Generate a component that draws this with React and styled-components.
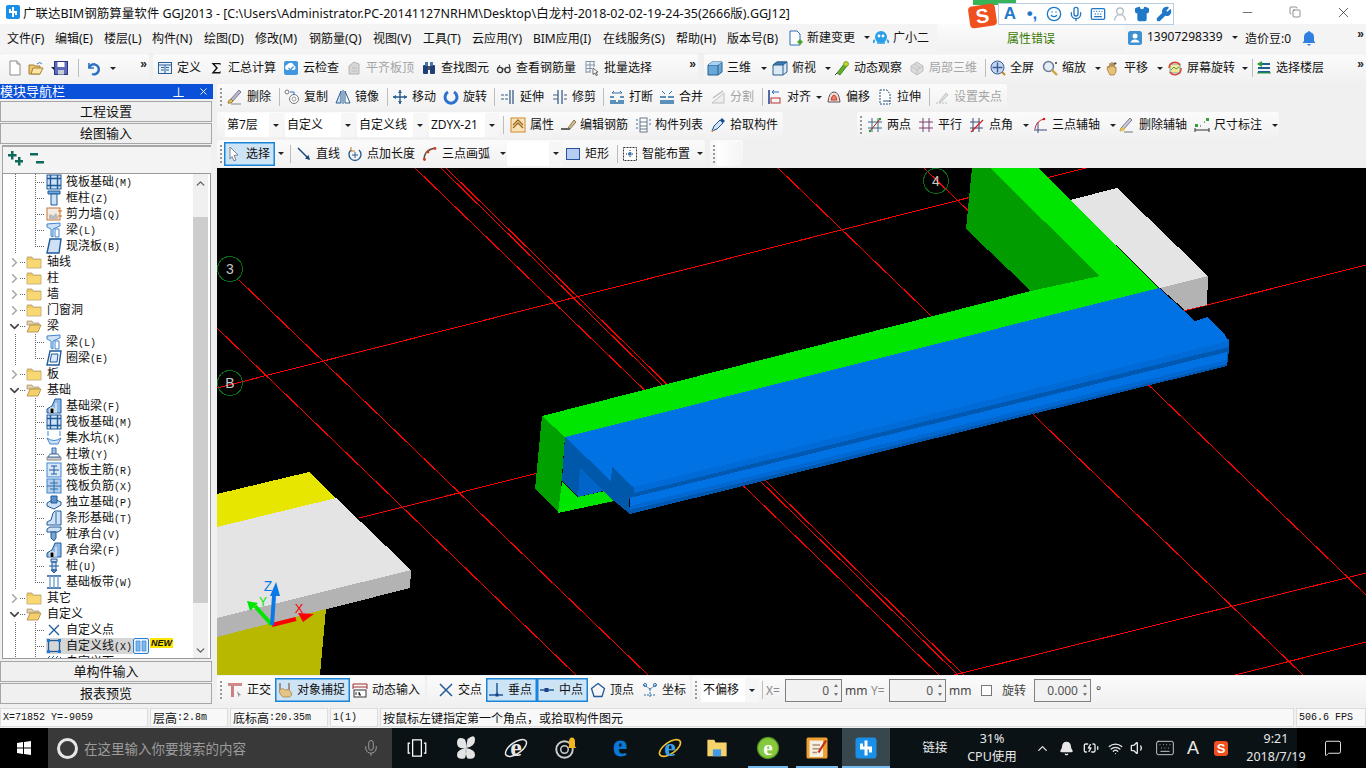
import React from "react";
import styled, { createGlobalStyle } from "styled-components";
import {
  Minus, Copy, X, Smile, Mic, Keyboard, Shirt, Wrench, UserRound, ChevronUp, Bell,
  BatteryCharging, Wifi, Volume1, MessageSquare, ChevronRight, ChevronDown,
} from "lucide-react";

const GlobalStyle = createGlobalStyle`
  html, body { margin: 0; padding: 0; background: #f0f0f0; overflow: hidden; }
  body { font-family: "Noto Sans", "Noto Sans CJK SC", sans-serif; font-size: 12px; color: #111; }
`;

const Page = styled.div`
  position: relative;
  width: 1366px;
  height: 768px;
  display: flex;
  flex-direction: column;
  overflow: hidden;
  background: #f0f0f0;
`;

/* title bar */
const TitleBar = styled.div`
  height: 24px;
  flex: none;
  display: flex;
  align-items: center;
  background: #fff;
  padding-left: 5px;
  gap: 2px;
`;
const TitleText = styled.div`
  font-size: 12.5px;
  white-space: nowrap;
  flex: 1;
`;
const WinBtn = styled.div`
  width: 46px;
  height: 24px;
  display: flex;
  align-items: center;
  justify-content: center;
  color: #222;
`;
const ImeBar = styled.div`
  position: absolute;
  top: 3px;
  left: 998px;
  width: 176px;
  height: 22px;
  display: flex;
  align-items: center;
  gap: 6px;
  padding-left: 3px;
  box-sizing: border-box;
  background: #fff;
  border: 1px solid #b9cde0;
  color: #1f78c8;
`;
const ImeGreen = styled.div`
  position: absolute;
  top: 0;
  left: 973px;
  width: 43px;
  height: 5px;
  background: #35b558;
`;
const ImeLogo = styled.div`
  position: absolute;
  top: 5px;
  left: 969px;
  width: 27px;
  height: 22px;
  border-radius: 4px;
  background: #f0501e;
  color: #fff;
  font: 900 20px/22px "Liberation Sans", sans-serif;
  text-align: center;
  transform: rotate(-8deg);
`;
const ImeLetter = styled.span`
  font: 700 17px/20px "Liberation Sans", sans-serif;
  width: 16px;
  text-align: center;
`;

/* menu */
const MenuBar = styled.div`
  height: 29px;
  flex: none;
  display: flex;
  align-items: center;
  box-sizing: border-box;
  padding: 0 0 2px 7px;
  background: #f4f4f4;
`;
const MenuItem = styled.div`
  width: ${(p) => p.$w}px;
  flex: none;
  white-space: nowrap;
`;
const AlertTab = styled.div`
  width: 188px;
  height: 100%;
  flex: none;
  display: flex;
  align-items: center;
  justify-content: center;
  background: linear-gradient(#fbfbfb, #f1f1f1);
  color: #3c7a00;
  border-radius: 3px 3px 0 0;
`;
const Beans = styled.div`
  margin-left: 3px;
  width: 56px;
  flex: none;
  white-space: nowrap;
`;
const More = styled.div`
  margin-left: auto;
  padding-right: 2px;
  margin-bottom: 8px;
  font: 700 12px/12px "Liberation Sans", sans-serif;
  color: #222;
`;

/* toolbars */
const ToolRow = styled.div`
  display: flex;
  height: ${(p) => p.$h || 26}px;
  flex: none;
  margin-top: ${(p) => p.$mt || 0}px;
  margin-bottom: ${(p) => p.$mb ?? 2}px;
`;
const ToolGroup = styled.div`
  display: flex;
  align-items: center;
  height: 100%;
  width: ${(p) => (p.$w ? `${p.$w}px` : "auto")};
  flex: ${(p) => (p.$w ? "none" : 1)};
  margin-left: ${(p) => p.$ml || 0}px;
  padding-left: ${(p) => p.$pl || 0}px;
  box-sizing: border-box;
  background: linear-gradient(#fbfbfb, #f1f1f1);
  border-radius: 3px;
`;
const ToolBtn = styled.div`
  width: ${(p) => p.$w}px;
  height: ${(p) => (p.$active ? "24px" : "100%")};
  flex: none;
  display: flex;
  align-items: center;
  gap: 4px;
  padding-left: 2px;
  box-sizing: border-box;
  white-space: nowrap;
  color: ${(p) => (p.$off ? "#a4a4a4" : "#111")};
  background: ${(p) => (p.$active ? "#cde4f7" : "transparent")};
  box-shadow: ${(p) => (p.$active ? "inset 0 0 0 1.5px #1a84d8" : "none")};
  span { margin-bottom: 2px; }
`;
const Tri = styled.i`
  flex: none;
  width: 0;
  height: 0;
  margin-left: ${(p) => p.$ml ?? 1}px;
  border-left: 3px solid transparent;
  border-right: 3px solid transparent;
  border-top: 3px solid #222;
`;
const Sep = styled.div`
  width: ${(p) => p.$w}px;
  height: 18px;
  flex: none;
  background: linear-gradient(#bdbdbd, #bdbdbd) center / 1px 100% no-repeat;
`;
const Handle = styled.div`
  width: ${(p) => p.$w}px;
  height: 18px;
  flex: none;
  background: repeating-linear-gradient(to bottom, #999 0 2px, transparent 2px 4px) 3px 0 / 2px 100% no-repeat;
`;
const Combo = styled.div`
  width: ${(p) => p.$w}px;
  height: 24px;
  margin-left: ${(p) => p.$ml || 0}px;
  flex: none;
  display: flex;
  align-items: center;
  white-space: nowrap;
`;
const ComboText = styled.div`
  flex: 1;
  height: 100%;
  padding: 0 0 2px 2px;
  box-sizing: border-box;
  display: flex;
  align-items: center;
  background: #fff;
`;
const ComboArrow = styled.div`
  width: 14px;
  height: 100%;
  flex: none;
  display: flex;
  align-items: center;
  justify-content: center;
  background: #f6f6f6;
`;
const FakeBox = styled.div`
  width: 24px;
  height: 24px;
  background: linear-gradient(to right, #fff, #f4f4f4);
`;

/* main */
const Main = styled.div`
  flex: 1;
  display: flex;
  min-height: 0;
`;
const Side = styled.div`
  width: 217px;
  flex: none;
  display: flex;
  flex-direction: column;
`;
const SideHead = styled.div`
  width: 213px;
  height: 15px;
  flex: none;
  margin-bottom: 2px;
  display: flex;
  align-items: center;
  background: #0a50d8;
  color: #fff;
  font-size: 13px;
  padding-right: 4px;
  box-sizing: border-box;
  gap: 13px;
`;
const SideTitle = styled.span`
  flex: 1;
  line-height: 15px;
`;
const SideTab = styled.div`
  width: 212px;
  height: 21px;
  flex: none;
  margin-bottom: 1px;
  padding-bottom: 2px;
  box-sizing: border-box;
  display: flex;
  align-items: center;
  justify-content: center;
  background: #f0f0f0;
  border: 1px solid #a6a6a6;
  font-size: 13px;
`;
const TreeTools = styled.div`
  width: 209px;
  height: 28px;
  margin-left: 2px;
  flex: none;
  box-sizing: border-box;
  border-top: 2px solid #a6a6a6;
  border-left: 1px solid #a6a6a6;
  display: flex;
  align-items: center;
  padding: 0 0 4px 4px;
  gap: 6px;
  background: #f4f4f4;
`;
const TreeBox = styled.div`
  width: 209px;
  height: 486px;
  margin: 0 0 2px 2px;
  flex: none;
  box-sizing: border-box;
  border: 1px solid #9a9a9a;
  background: #fff;
  display: flex;
  overflow: hidden;
`;
const TreeList = styled.div`
  flex: 1;
  min-width: 0;
`;
const dotsV = "repeating-linear-gradient(to bottom, #666 0 1px, transparent 1px 2px)";
const dotsH = "repeating-linear-gradient(to right, #666 0 1px, transparent 1px 2px)";
const TreeRow = styled.div`
  height: 16px;
  display: flex;
  align-items: center;
  white-space: nowrap;
  font-family: "Liberation Mono", "Noto Sans CJK SC", monospace;
  padding-left: ${(p) => (p.$child ? 43 : 6)}px;
  background-repeat: no-repeat;
  background-image: ${(p) =>
    p.$child ? `${dotsV}, ${dotsV}, ${dotsH}` : `${dotsH}`};
  background-size: ${(p) =>
    p.$child ? `1px 100%, 1px ${p.$last ? "8px" : "100%"}, 10px 1px` : "6px 1px"};
  background-position: ${(p) =>
    p.$child ? "12px 0, 32px 0, 32px 8px" : "17px 8px"};
`;
const RowLabel = styled.div`
  display: flex;
  align-items: center;
  gap: 4px;
  height: 16px;
  background: ${(p) => (p.$sel ? "#d6d6d6" : "transparent")};
  padding-right: ${(p) => (p.$sel ? 1 : 0)}px;
  span { margin-bottom: 2px; }
`;
const Hot = styled.span`
  font: 10px "Liberation Mono", monospace;
`;
const FolderArrow = styled.div`
  width: 10px;
  flex: none;
  display: flex;
  justify-content: center;
  margin-right: 7px;
  color: ${(p) => (p.$open ? "#444" : "#a8a8a8")};
  svg { margin: 0 -3px; }
`;
const FolderName = styled.span`
  margin: 0 0 2px 5px;
`;
const NewBadge = styled.span`
  margin: -7px 0 0 1px;
  padding: 0 1px;
  background: #ffe600;
  font: italic 700 9px/10px "Liberation Sans", sans-serif;
  color: #111;
`;
const ScrollBar = styled.div`
  width: 15px;
  flex: none;
  margin-right: 2px;
  display: flex;
  flex-direction: column;
  align-items: center;
  background: #f0f0f0;
`;
const ScrollEnd = styled.div`
  height: 43px;
  flex: none;
  display: flex;
  align-items: flex-start;
  justify-content: center;
  padding: 3px 0;
  box-sizing: border-box;
  color: #606060;
`;
const ScrollThumb = styled.div`
  width: 15px;
  height: 386px;
  flex: none;
  background: #cdcdcd;
`;
const ScrollRest = styled.div`
  flex: 1;
  display: flex;
  align-items: flex-end;
  justify-content: center;
  color: #606060;
  padding-bottom: 1px;
`;

const Work = styled.div`
  flex: 1;
  min-width: 0;
  display: flex;
  flex-direction: column;
`;
const Canvas = styled.div`
  height: 507px;
  flex: none;
  background: #000;
  overflow: hidden;
  svg { display: block; }
`;
const FormLabel = styled.span`
  color: ${(p) => (p.$dim ? "#8a8a8a" : "#444")};
  margin-left: ${(p) => p.$ml || 0}px;
  width: ${(p) => (p.$w ? `${p.$w}px` : "auto")};
  flex: none;
`;
const SpinBox = styled.div`
  width: 57px;
  height: 23px;
  flex: none;
  box-sizing: border-box;
  border: 1px solid #808080;
  display: flex;
  align-items: center;
  justify-content: flex-end;
  color: #555;
  gap: 3px;
  padding-right: 2px;
  background: #f2f2f2;
`;
const SpinArrows = styled.div`
  display: flex;
  flex-direction: column;
  gap: 6px;
  width: 7px;
  align-items: center;
`;
const SpinTri = styled.i`
  width: 0;
  height: 0;
  border-left: 2.5px solid transparent;
  border-right: 2.5px solid transparent;
  ${(p) => (p.$up ? "border-bottom: 3px solid #777;" : "border-top: 3px solid #777;")}
`;
const CheckBox = styled.div`
  width: 11px;
  height: 11px;
  flex: none;
  margin-left: 8px;
  box-sizing: border-box;
  border: 1px solid #777;
  background: #fff;
`;

/* status bar */
const StatusBar = styled.div`
  height: 23px;
  flex: none;
  box-sizing: border-box;
  padding: 3px 0 1px;
  display: flex;
  gap: 2px;
  background: #f0f0f0;
`;
const StatusCell = styled.div`
  width: ${(p) => (p.$w ? `${p.$w}px` : "auto")};
  flex: ${(p) => (p.$w ? "none" : 1)};
  box-sizing: border-box;
  border: 1px solid #dcdcdc;
  background: #f8f8f8;
  display: flex;
  align-items: center;
  padding-left: 2px;
  white-space: nowrap;
  font-family: "Liberation Mono", "Noto Sans CJK SC", monospace;
  font-size: ${(p) => p.$fs || 12}px;
`;

/* taskbar */
const Taskbar = styled.div`
  height: 40px;
  flex: none;
  display: flex;
  align-items: stretch;
  background: linear-gradient(to right, #0a1216 1297px, #000 1297px);
  color: #e8e8e8;
`;
const StartBtn = styled.div`
  width: 48px;
  flex: none;
  background: #000;
  display: flex;
  align-items: center;
  justify-content: center;
`;
const SearchBox = styled.div`
  width: 344px;
  flex: none;
  background: #393939;
  display: flex;
  align-items: center;
  padding: 0 12px 0 9px;
  box-sizing: border-box;
  color: #9c9c9c;
  font-size: 13.5px;
  gap: 6px;
`;
const SearchRing = styled.div`
  width: 21px;
  height: 21px;
  flex: none;
  box-sizing: border-box;
  border: 3px solid #e6e6e6;
  border-radius: 50%;
`;
const SearchHint = styled.span`
  flex: 1;
  white-space: nowrap;
`;
const TaskSlot = styled.div`
  position: relative;
  width: ${(p) => p.$w}px;
  flex: none;
  display: flex;
  align-items: center;
  justify-content: center;
  background: ${(p) => (p.$active ? "#38464e" : "transparent")};
  &::after {
    content: "";
    display: ${(p) => (p.$run ? "block" : "none")};
    position: absolute;
    left: ${(p) => (p.$active ? 0 : 4)}px;
    right: ${(p) => (p.$active ? 0 : 4)}px;
    bottom: 0;
    height: 2px;
    background: #76b9ed;
  }
`;
const TrayText = styled.div`
  width: ${(p) => p.$w}px;
  flex: none;
  display: flex;
  flex-direction: column;
  justify-content: center;
  align-items: center;
  font-size: 12.5px;
  line-height: 18px;
  padding-left: ${(p) => p.$pl || 0}px;
  box-sizing: border-box;
  white-space: nowrap;
`;
const TrayIcon = styled.div`
  width: ${(p) => p.$w}px;
  margin-left: ${(p) => p.$ml || 0}px;
  flex: none;
  display: flex;
  align-items: center;
  justify-content: center;
`;
const TrayLetter = styled.span`
  font: 18px "Liberation Sans", sans-serif;
`;
const ImeSmall = styled.span`
  width: 14px;
  height: 15px;
  border-radius: 3px;
  background: #f0501e;
  color: #fff;
  font: 900 13px/15px "Liberation Sans", sans-serif;
  text-align: center;
`;

/* small toolbar and tree drawings on a 16 x 16 grid */
const B = "#2a6fc4";
const serifE = { fontFamily: "Liberation Serif", fontWeight: 700, textAnchor: "middle" };
const G = {
  app: <><rect x="1" y="1" width="14" height="14" rx="2" fill="#1a8fe8" /><path d="M8 3v10M4 8h8M5 5v3M11 8v3" stroke="#fff" strokeWidth="2" fill="none" /></>,
  new: <><path d="M3 1h7l3 3v11H3z" fill="#fff" stroke="#8a8a8a" /><path d="M10 1v3h3" fill="#e6e6e6" stroke="#8a8a8a" /></>,
  open: <><path d="M1 5h5l1 1h5v8H1z" fill="#eec86a" stroke="#a4803a" /><path d="M3 14l2-6h10l-3 6z" fill="#fbe5a2" stroke="#a4803a" /><path d="M9 4q3-3 5 0" stroke="#3d7fc4" fill="none" /></>,
  save: <><rect x="1.5" y="1.5" width="13" height="13" fill="#5d6bb8" stroke="#2c3680" /><rect x="4.5" y="2" width="7" height="5" fill="#fff" /><rect x="5" y="10" width="6" height="4.5" fill="#c8ccd8" /></>,
  undo: <><path d="M4 3v5h5" stroke={B} strokeWidth="1.6" fill="none" /><path d="M4 8a5 5 0 1 1 3 6" stroke={B} strokeWidth="2.4" fill="none" /></>,
  define: <><rect x="1.5" y="2.5" width="13" height="11" fill="#e8f1fb" stroke="#2b5f97" /><path d="M1.5 5h13M4 7.5h3M4 10h3M9 7.5h3M9 10h3M8 5v8" stroke="#2b5f97" fill="none" /></>,
  sigma: <path d="M3.5 3h9v2.5l-1-1.2H6.5l3.5 3.7-3.5 4h5l1-1.2v2.7h-9l4.5-5.500z" fill="#111" />,
  cloud: <><rect x="1" y="1" width="14" height="14" rx="2" fill="#3f97e0" /><path d="M3.5 10a3 3 0 0 1 1-5.5 3.5 3.5 0 0 1 6.5 1 2.4 2.4 0 0 1 0 4.5z" fill="#fff" /><path d="M5.5 8l2 2 3-3.5" stroke="#3f97e0" strokeWidth="1.2" fill="none" /></>,
  flush: <><path d="M3 14V6l5-4 5 2v10z" fill="#d6d6d6" stroke="#b4b4b4" /><path d="M6 8h5M6 11h5" stroke="#bcbcbc" /></>,
  find: <><rect x="2" y="5" width="5" height="9" rx="1" fill="#1f3f78" /><rect x="9" y="5" width="5" height="9" rx="1" fill="#1f3f78" /><rect x="4" y="2" width="3" height="4" fill="#4c72ad" /><rect x="9" y="2" width="3" height="4" fill="#4c72ad" /><rect x="7" y="6" width="2" height="4" fill="#556" /></>,
  glasses: <><circle cx="4" cy="10" r="2.6" fill="none" stroke="#333" strokeWidth="1.3" /><circle cx="11.5" cy="10" r="2.6" fill="none" stroke="#333" strokeWidth="1.3" /><path d="M6.5 9.5q1.2-1 2.5 0M2 8l2-3M14 8l-1-4" stroke="#333" fill="none" /></>,
  batch: <><path d="M2 1.5h9M2 5h9M2 8.5h6M2 12h5M2 1v12M6 1v11M10 1v6" stroke="#8193a8" fill="none" /><path d="M9 8l5 4-2 .5 1.5 2.5-1.5.5-1-2.5-2 1.5z" fill="#fff" stroke="#333" strokeWidth=".7" /></>,
  cube: <><path d="M1 5l4-3h10v10l-4 3H1z" fill="#6aa8d8" stroke="#2a5f8f" /><path d="M1 5h10v10M11 5l4-3" stroke="#2a5f8f" fill="none" /><path d="M1 5l4-3h10l-4 3z" fill="#a8d2ef" /></>,
  top: <><path d="M1 5l4-3h10v10l-4 3H1z" fill="#dbe9f4" stroke="#2a5f8f" /><path d="M1 5l4-3h10l-4 3z" fill="#3a7ab5" stroke="#2a5f8f" /><path d="M11 5v10" stroke="#2a5f8f" /></>,
  orbit: <><path d="M3 13l7-9 3 2-7 9z" fill="#5fae2c" stroke="#2c6a12" strokeWidth=".7" /><circle cx="12" cy="4" r="2.5" fill="#b8d932" stroke="#6a8a12" strokeWidth=".7" /><path d="M1 15l2-2" stroke="#333" /></>,
  local: <><path d="M2 6l6-4 6 4v5l-6 4-6-4z" fill="#dcdcdc" stroke="#c0c0c0" /><path d="M2 6l6 4 6-4M8 10v5M5 4l6 4" stroke="#c0c0c0" fill="none" /></>,
  full: <><circle cx="7.5" cy="7.5" r="6.5" fill="#c3d6ef" stroke="#3b5d96" /><path d="M7.5 2.5v10M2.5 7.5h10" stroke="#3b5d96" strokeWidth="1.4" /><path d="M12 12l3 3" stroke="#b88a2e" strokeWidth="2" /></>,
  zoom: <><circle cx="6.5" cy="6.5" r="5" fill="#e6ecf4" stroke="#6d7c90" strokeWidth="1.5" /><path d="M10 10l5 5" stroke="#caa53c" strokeWidth="2.4" /><path d="M13 3h2M14 2v2" stroke="#333" /></>,
  pan: <><path d="M3 9l1-3 1 2 1-5 1 4 1-5 1 5 1-4 1 5 1-1v5l-2 3H6z" fill="#e6c178" stroke="#a07a38" strokeWidth=".8" /><path d="M11 2v3M9.5 3.5h3" stroke="#555" /></>,
  spin: <><rect x="3" y="4" width="10" height="9" fill="#f5e79a" stroke="#7ba0c0" /><path d="M4 10l3-3 2 2 3-2" stroke="#4aa04a" fill="none" /><path d="M2 8a6 6 0 0 1 11-3M14 8a6 6 0 0 1-11 4" stroke="#d8402a" strokeWidth="1.4" fill="none" /></>,
  floor: <><path d="M2 4h12M2 8h12M2 12h12" stroke="#1f5f8f" strokeWidth="2" /><path d="M6 1L1 4l5 3z" fill="#27a02f" /><path d="M1 13h14" stroke="#27a02f" /></>,
  del: <><path d="M1 14l4-1 9-10-2-2-9 10z" fill="#b8b8d8" stroke="#555" strokeWidth=".7" /><path d="M1 14q0-3 3-4l2 2q-1 3-5 2z" fill="#e8c050" stroke="#7a5a20" strokeWidth=".6" /><path d="M4 15h10" stroke="#888" /></>,
  copy: <><circle cx="10" cy="10" r="4.5" fill="#fff" stroke="#777" /><circle cx="10" cy="10" r="2" fill="none" stroke="#999" /><circle cx="3" cy="3" r="2" fill="none" stroke="#777" /><path d="M6 3h4v3" stroke={B} fill="none" /></>,
  mirror: <><path d="M1 14L6 2v12z" fill="#c9dff2" stroke="#2a5f8f" /><path d="M15 14L10 2v12z" fill="#fff" stroke="#2a5f8f" /><path d="M8 1v14" stroke="#2a5f8f" /></>,
  move: <><path d="M8 1v14M1 8h14" stroke="#2a5f8f" strokeWidth="1.4" /><path d="M8 1L6 4h4zM8 15l-2-3h4zM1 8l3-2v4zM15 8l-3-2v4z" fill="#2a5f8f" /></>,
  turn: <path d="M5 3a6 6 0 1 0 6 0" stroke="#2c71d0" strokeWidth="3" fill="none" />,
  extend: <><path d="M13 1v14M10 1v14" stroke="#3a5f8a" strokeWidth="1.3" /><path d="M1 6h3M1 10h3M5 6h3M5 10h3" stroke="#3a5f8a" /></>,
  trim: <><path d="M6 1v14M10 1v14" stroke="#3a5f8a" strokeWidth="1.3" /><path d="M1 6h5M1 10h5M12 6h3M12 10h3" stroke="#3a5f8a" /></>,
  split2: <><path d="M1 12h6M9 12h6M1 14h14M1 8h4M11 8h4" stroke="#2a6fa8" strokeWidth="1.3" /><path d="M3 4h10M3 4l2-2M13 4l-2-2" stroke="#2a6fa8" fill="none" /></>,
  merge: <><path d="M1 12h14M1 14h14M1 8h6M9 8h6" stroke="#2a6fa8" strokeWidth="1.3" /><path d="M3 2l3 3M13 2l-3 3" stroke="#2a6fa8" /></>,
  cutoff: <><path d="M2 14L14 4v10z" fill="#eee" stroke="#c0c0c0" /><path d="M3 9l10-7" stroke="#bdbdbd" strokeWidth="1.5" /></>,
  align: <><path d="M2 1v14" stroke="#1a3f8f" strokeWidth="1.5" /><path d="M5 3h7M5 3l2-2M5 3l2 2" stroke={B} fill="none" /><rect x="4" y="9" width="9" height="5" fill="none" stroke="#c03030" /></>,
  offset: <><path d="M2 13q1-10 6-10t6 10z" fill="#f8e2dc" stroke="#555" /><path d="M5 11q1-5 3-5t3 5z" fill="#e88070" stroke="#c04030" /></>,
  stretch: <><path d="M3 1h7l3 4v10H3z" fill="#fff" stroke="#2a4f7f" strokeDasharray="2 1" /><path d="M6 12h7" stroke="#2a4f7f" /></>,
  grip: <><path d="M2 14h12" stroke="#bbb" strokeDasharray="2 1" /><path d="M5 13l7-9 2 2-7 7z" fill="#ddd" stroke="#c4c4c4" /></>,
  attr: <><rect x="1" y="1" width="14" height="14" fill="#fbe3b8" stroke="#d08a30" /><path d="M3 11l5-5 5 5M3 8l5-5 5 5" stroke="#9a6a20" fill="none" strokeWidth="1.3" /></>,
  rebar: <><path d="M1 12h9" stroke="#333" strokeWidth="1.5" /><path d="M8 11l6-8 2 2-6 7z" fill="#d8c090" stroke="#5a4a20" strokeWidth=".7" /></>,
  list: <><rect x="5" y="1" width="7" height="14" fill="#fff" stroke="#66778a" /><path d="M5 5h7M5 9h7M5 12h7" stroke="#66778a" /><path d="M1 3h2M1 7h2M1 11h2M14 3h2M14 7h2" stroke="#2f6fa8" /></>,
  pick: <><path d="M2 14l2-5 6-6 3 3-6 6z" fill="#cfe3f6" stroke="#1f4f8f" /><path d="M10 3l2-2 3 3-2 2z" fill="#1f4f8f" /><path d="M2 15l1-2" stroke="#e08030" strokeWidth="1.3" /></>,
  twopt: <><path d="M1 5h14M1 11h14M5 1v14M11 1v14" stroke="#3f6a7f" /><path d="M3 14L13 2" stroke="#b02020" /><circle cx="3" cy="14" r="1.2" fill="#2a9a2a" /><circle cx="13" cy="2" r="1.2" fill="#2a9a2a" /></>,
  para: <path d="M1 5h14M1 11h14M5 1v14M11 1v14" stroke="#7a3f6f" />,
  angle: <><path d="M1 5h10M1 11h13M4 1v14M10 1v14" stroke="#3f4a7f" /><path d="M2 15L14 3" stroke="#d02020" strokeWidth="1.2" /></>,
  arc3: <><path d="M2 13h13M6 5v11" stroke="#3f4a7f" /><path d="M3 12q1-8 9-10" stroke="#d02020" fill="none" /><circle cx="12" cy="2" r="1.3" fill="#d02020" /></>,
  delaxis: <><path d="M1 14l3-1 9-10-2-2-9 10z" fill="#c8c8e4" stroke="#555" strokeWidth=".7" /><path d="M1 14q0-3 3-4l2 2q-1 3-5 2z" fill="#e8c050" /><path d="M5 15h9" stroke="#777" /></>,
  dim: <><path d="M1 13h14M1 11v4M15 11v4" stroke="#333" /><rect x="1" y="7" width="3" height="3" fill="#33a033" /><rect x="12" y="1" width="3" height="3" fill="#33a033" /><path d="M6 9h2M10 5h2" stroke="#333" strokeDasharray="1 1" /></>,
  cursor: <path d="M4 1l8 8-4 .5 2 4.5-2 1-2-4.5-2 2.5z" fill="#fff" stroke="#667" strokeWidth=".8" />,
  line: <><path d="M2 2l11 11" stroke="#16447f" strokeWidth="1.4" /><path d="M14 14l-5-1.5 3.5-3.5z" fill="#16447f" /></>,
  addlen: <><path d="M4 4a6 6 0 1 0 8 0" stroke="#2a5f8f" strokeWidth="1.4" fill="none" /><path d="M8 6v6M5 9h6" stroke="#2a5f8f" /><path d="M4 1v4h4" fill="none" stroke="#c07a20" /></>,
  arc: <><path d="M2 14q0-10 11-12" stroke="#6a4a3a" strokeWidth="1.5" fill="none" /><circle cx="2.5" cy="13.5" r="1.4" fill="#d04020" /><circle cx="6" cy="6" r="1.4" fill="#d04020" /><circle cx="13" cy="2.5" r="1.4" fill="#d04020" /></>,
  rect: <rect x="1.5" y="2.5" width="13" height="11" fill="#b5cdf0" stroke="#2a50a0" />,
  smart: <><rect x="1.5" y="1.5" width="13" height="13" fill="#fff" stroke="#333" strokeDasharray="2 1" /><path d="M8 4v8M4 8h8" stroke="#333" strokeDasharray="1 1" /><rect x="6.5" y="6.5" width="3" height="3" fill="#2a70c0" /></>,
  ortho: <><path d="M1 1h14v3H1z" fill="#d08a8a" /><path d="M4 4h3v11H4z" fill="#cc8080" /><path d="M10 9l4 4-2 .5-.5 2z" fill="#9a9a9a" /></>,
  snap: <><path d="M3 1v7M12 1v7" stroke="#7a3a20" /><path d="M2 9q3-4 6-1 4-2 6 2t-2 5H6q-3-2-4-6z" fill="#e2c486" stroke="#a0803c" strokeWidth=".7" /></>,
  dyn: <><path d="M1 2h14M1 2v5M15 2v5M1 5h14" stroke="#a03030" /><rect x="2" y="8" width="12" height="7" fill="#fff" stroke="#333" /><path d="M4 10v3M7 10v3h2" stroke="#333" /></>,
  cross: <path d="M2 2l12 12M14 2L2 14" stroke="#1f5a9a" strokeWidth="1.5" />,
  perp: <><path d="M1 13h14" stroke="#1f5a9a" strokeWidth="1.5" /><path d="M9 1v12" stroke="#1f5a9a" strokeWidth="1.5" /><rect x="7.5" y="11.5" width="3" height="3" fill="#1f3f8a" /></>,
  mid: <><path d="M1 8h14" stroke="#1f5a9a" strokeWidth="1.5" /><rect x="5.5" y="6" width="4" height="4" fill="#1f3f8a" /></>,
  vertex: <path d="M8 1.5l6.5 5-2.5 8H4l-2.5-8z" fill="none" stroke="#1f5a9a" strokeWidth="1.3" />,
  coord: <><path d="M8 15V7M8 7L2 3M8 7l6-4M2 13h12" stroke="#2a6fa8" strokeDasharray="2 1" /><circle cx="3" cy="3" r="1.5" fill="none" stroke="#2a6fa8" /><circle cx="13" cy="3" r="1.5" fill="none" stroke="#2a6fa8" /></>,
  change: <><path d="M3 1h7l3 3v11H3z" fill="#fff" stroke="#2a70b0" /><path d="M10 12l3-3 3 3-3 3z" fill="#4da52d" /></>,
  robot: <><circle cx="8" cy="7" r="6" fill="#2b9ee8" /><circle cx="6" cy="6" r="1.4" fill="#fff" /><circle cx="10" cy="6" r="1.4" fill="#fff" /><path d="M2 10q-2 1-1 3M14 10q2 1 1 3M4 13h8" stroke="#2b9ee8" strokeWidth="1.6" fill="none" /></>,
  user: <><rect x="1" y="1" width="14" height="14" rx="2.5" fill="#3f90d0" /><circle cx="8" cy="6" r="2.5" fill="#fff" /><path d="M3.5 12.5q1-3 4.5-3t4.5 3z" fill="#fff" /></>,
  bellblue: <path d="M8 1q1 0 1 1 4 1 4 5v4l1.5 2h-13L3 11V7q0-4 4-5 0-1 1-1zM6 14h4l-2 2z" fill="#2f7fe0" />,
  plus: <path d="M4 1h2.5v3h3v2.5h-3v3H4v-3H1V4h3zM11 7h2.5v3H16v2.5h-2.5v3H11v-3H8V10h3z" fill="#0f6a5a" />,
  minus: <path d="M1 3h8v2.5H1zM7 11h8v2.5H7z" fill="#0f6a5a" />,
  folder: <><path d="M1 3h5l1 2h8v9H1z" fill="#f0c85e" stroke="#b0a07a" strokeWidth=".8" /><path d="M1.5 6h13v7.5h-13z" fill="#f7d873" /></>,
  folderopen: <><path d="M1 3h5l1 2h6v2H1z" fill="#e2d0a0" stroke="#aa9a78" strokeWidth=".8" /><path d="M1 14l3-7h11l-3 7z" fill="#f4cf6a" stroke="#aa8a48" strokeWidth=".8" /></>,
  raft: <><rect x="1" y="1" width="14" height="14" fill="#cfe1f5" stroke="#1f5a9a" /><path d="M1 4.5h14M1 11.5h14M4.5 1v14M11.5 1v14" stroke="#1f5a9a" strokeWidth="1.4" /></>,
  column: <><path d="M2 1h12v3H2z" fill="#6ea7df" stroke="#1f5a9a" /><path d="M5 4h6v11H5z" fill="#cfe1f5" stroke="#1f5a9a" /></>,
  wall: <><rect x="1" y="2" width="13" height="12" fill="#f6ebe0" stroke="#c4763a" /><path d="M3 9l2-1 2 2 3-3 2 4v2H3z" fill="#bbb" /><path d="M12 5h4M12 10h4" stroke="#d07020" /></>,
  beam: <><path d="M1 2l13-1v3L7 7v8l-2-1V7L1 5z" fill="#cfe1f5" stroke="#3f87cf" /><path d="M9 7h4v8H9z" fill="#fff" stroke="#3f87cf" /></>,
  slab: <path d="M4 1h11l-2 14H1z" fill="#cfe1f5" stroke="#1f5a9a" strokeWidth="1.4" />,
  ring: <><path d="M4 1h11l-2 14H1z" fill="#fff" stroke="#1f5a9a" strokeWidth="1.4" /><path d="M5.5 4h6.5l-1 8H4z" fill="#dbe9f8" stroke="#1f5a9a" /></>,
  fbeam: <><path d="M1 15v-4l5-3 3-7h6v14z" fill="#8db8e6" stroke="#1f5a9a" /><path d="M4 15V10h4v5M10 15V5" stroke="#fff" /></>,
  pit: <path d="M2 1v5M14 1v5M1 8q7 5 14 0l-3 6H4z" fill="#cfe1f5" stroke="#3f87cf" />,
  ped: <><path d="M6 2h4v6H6z" fill="#9fc2e8" stroke="#3f6f9f" /><path d="M1 11h14v3H1z" fill="#d0d0d0" stroke="#888" /><path d="M4 8h8l2 3H2z" fill="#fff" stroke="#3f6f9f" /></>,
  rmain: <><rect x="1" y="1" width="14" height="14" fill="#d9e8f8" stroke="#3f87cf" /><path d="M3 8h10M8 4v8M11 4h-6M5 12h6" stroke="#1f5a9a" fill="none" /></>,
  rneg: <><rect x="1" y="1" width="14" height="14" fill="#b4d0ee" stroke="#3f87cf" /><path d="M1 8h14M8 1v14M4 5h8M4 11h8" stroke="#2f6fa8" fill="none" /></>,
  iso: <><path d="M1 9l7-4 7 3v3l-7 4-7-3z" fill="#cfe1f5" stroke="#1f5a9a" /><path d="M5 2h6v7H5z" fill="#5a8fc8" stroke="#1f5a9a" /></>,
  strip: <><path d="M1 15v-3l4-2 2-7 2-2h6v14z" fill="#cfe1f5" stroke="#1f5a9a" /><path d="M10 1v14" stroke="#7fa6d0" strokeWidth="2" /></>,
  cap: <><path d="M1 3l3-2h11v3l-3 2H1z" fill="#cfe1f5" stroke="#1f5a9a" /><path d="M5 6h5v6l-2 3-3-3z" fill="#7fa6d0" stroke="#1f5a9a" /></>,
  pile: <><path d="M5 1h6v3H5zM6 4h4v8H6z" fill="#cfe1f5" stroke="#1f5a9a" /><path d="M3 8h10M5 12h6l-3 3z" fill="#5a8fc8" stroke="#1f5a9a" /></>,
  band: <><path d="M1 2h14M1 14h14" stroke="#1f5a9a" strokeWidth="1.5" /><path d="M4 2v12M8 2v12M12 2v12" stroke="#7fa6d0" strokeWidth="1.5" /></>,
  cpoint: <path d="M3 3l10 10M13 3L3 13" stroke="#1f5a9a" strokeWidth="1.3" />,
  cline: <><rect x="2.5" y="2.5" width="11" height="11" fill="none" stroke="#1f5a9a" strokeWidth="1.3" /><rect x="1" y="1" width="3" height="3" fill="#1f7ad8" /><rect x="12" y="1" width="3" height="3" fill="#1f7ad8" /><rect x="1" y="12" width="3" height="3" fill="#1f7ad8" /><rect x="12" y="12" width="3" height="3" fill="#1f7ad8" /></>,
  cface: <path d="M1 5l3-3M5 5l3-3M9 5l3-3M13 5l2-2" stroke="#1f5a9a" />,
  newpanel: <><rect x="0.5" y="0.5" width="15" height="15" rx="1.5" fill="#eaf3fc" stroke="#2a7fd0" /><path d="M3 3h4v10H3zM9 3h4v10H9z" fill="#7fb8ea" stroke="#2a7fd0" strokeWidth=".6" /></>,
  windows: <path d="M1 3l6-.9v5.4H1zM8 2l7-1v6.5H8zM1 8.5h6v5.4L1 13zM8 8.5h7V15l-7-1z" fill="#fff" />,
  taskview: <><rect x="4.5" y="1.5" width="7" height="13" fill="none" stroke="#fff" /><path d="M2.5 4H1v8h1.5M13.5 4H15v8h-1.5" stroke="#fff" fill="none" /></>,
  pinwheel: <path d="M8 8Q2 9 2 4.5T7 2q1.5 2 1 6zM8 8q6-1 6-5.5T9 2M8 8q-6 1-6 4.5T7 15q1.5-2 1-7zM8 8q6 1 6 4.5T9 15q-1.5-2-1-7z" fill="#e4e4e4" />,
  swirl: <><circle cx="7" cy="9" r="5.5" fill="none" stroke="#ccc" strokeWidth="1.3" /><circle cx="7" cy="9" r="2.5" fill="none" stroke="#ccc" /><path d="M12 1q2 0 2 3v3l1 1H9l1-1V4q0-3 2-3z" fill="#f3b61f" /></>,
  files: <><path d="M1 2h5l1 2h8v10H1z" fill="#f6d26a" /><path d="M5 9h6v5H5z" fill="#3f9be8" /></>,
  notes: <><rect x="1" y="1" width="14" height="14" rx="1" fill="#f0a030" /><rect x="3" y="3" width="9" height="11" fill="#f4efe0" /><path d="M5 6h5M5 8.5h5M5 11h3" stroke="#b09070" /><path d="M9 11l5-8" stroke="#c03020" strokeWidth="1.5" /></>,
  iewhite: <><ellipse cx="8" cy="8" rx="7.5" ry="3.5" transform="rotate(-35 8 8)" fill="none" stroke="#e8e8e8" strokeWidth=".9" /><text x="8" y="13" fontSize="16" fill="#e8e8e8" {...serifE}>e</text></>,
  edge: <text x="8" y="13" fontSize="19" fill="#0a78d7" stroke="#0a78d7" strokeWidth=".5" {...serifE}>e</text>,
  ie: <><ellipse cx="8" cy="8" rx="7.5" ry="3.5" transform="rotate(-35 8 8)" fill="none" stroke="#f2c230" strokeWidth="1" /><text x="8" y="13" fontSize="16" fill="#39a0ea" {...serifE}>e</text></>,
  greene: <><circle cx="8" cy="8" r="6.5" fill="#86c83e" stroke="#4e8a1e" strokeWidth=".7" /><text x="8" y="12" fontSize="13" fill="#fff" {...serifE}>e</text></>,
};

const Ic = ({ n, s = 16 }) => (
  <svg width={s} height={s} viewBox="0 0 16 16" style={{ flex: "none", overflow: "visible" }} aria-hidden="true">{G[n]}</svg>
);

const Tool = ({ icon, label, w, caret, off, active, cml }) => (
  <ToolBtn $w={w} $off={off} $active={active}>
    {icon && <Ic n={icon} />}
    {label && <span>{label}</span>}
    {caret && <Tri $ml={cml} />}
  </ToolBtn>
);

const items = (list) =>
  list.map((it, i) => {
    if (it.sep) return <Sep key={i} $w={it.sep} />;
    if (it.handle) return <Handle key={i} $w={it.handle} />;
    if (it.combo)
      return (
        <Combo key={i} $w={it.combo} $ml={it.ml}>
          <ComboText>{it.label}</ComboText>
          <ComboArrow><Tri $ml={0} /></ComboArrow>
        </Combo>
      );
    return <Tool key={i} {...it} />;
  });

const menus = [
  ["文件(F)", 48], ["编辑(E)", 49], ["楼层(L)", 48], ["构件(N)", 52], ["绘图(D)", 51], ["修改(M)", 54],
  ["钢筋量(Q)", 64], ["视图(V)", 50], ["工具(T)", 49], ["云应用(Y)", 61], ["BIM应用(I)", 70], ["在线服务(S)", 73],
  ["帮助(H)", 51], ["版本号(B)", 58],
];

const row1a = [
  { icon: "new", w: 21 }, { icon: "open", w: 25, caret: true, cml: 3 }, { icon: "save", w: 23 }, { sep: 9 },
  { icon: "undo", w: 27, caret: true, cml: 5 },
];
const row1b = [
  { icon: "define", label: "定义", w: 51 }, { icon: "sigma", label: "汇总计算", w: 75 }, { icon: "cloud", label: "云检查", w: 63 },
  { icon: "flush", label: "平齐板顶", w: 75, off: true }, { icon: "find", label: "查找图元", w: 75 },
  { icon: "glasses", label: "查看钢筋量", w: 88 }, { icon: "batch", label: "批量选择", w: 75 },
];
const row1c = [
  { icon: "cube", label: "三维", w: 65, caret: true, cml: 6 }, { icon: "top", label: "俯视", w: 62, caret: true, cml: 5 },
  { icon: "orbit", label: "动态观察", w: 75 }, { icon: "local", label: "局部三维", w: 75, off: true }, { sep: 6 },
  { icon: "full", label: "全屏", w: 52 }, { icon: "zoom", label: "缩放", w: 62, caret: true, cml: 5 },
  { icon: "pan", label: "平移", w: 63, caret: true, cml: 5 }, { icon: "spin", label: "屏幕旋转", w: 85, caret: true, cml: 3 },
  { sep: 4 }, { icon: "floor", label: "选择楼层", w: 75 },
];
const row2 = [
  { handle: 8 }, { icon: "del", label: "删除", w: 52 }, { sep: 5 }, { icon: "copy", label: "复制", w: 51 },
  { icon: "mirror", label: "镜像", w: 52 }, { sep: 5 }, { icon: "move", label: "移动", w: 51 }, { icon: "turn", label: "旋转", w: 50 },
  { sep: 7 }, { icon: "extend", label: "延伸", w: 52 }, { icon: "trim", label: "修剪", w: 50 }, { sep: 7 },
  { icon: "split2", label: "打断", w: 50 }, { icon: "merge", label: "合并", w: 51 }, { icon: "cutoff", label: "分割", w: 51, off: true },
  { sep: 6 }, { icon: "align", label: "对齐", w: 59, caret: true, cml: 1 }, { icon: "offset", label: "偏移", w: 51 },
  { icon: "stretch", label: "拉伸", w: 51 }, { sep: 6 }, { icon: "grip", label: "设置夹点", w: 75, off: true },
];
const row3a = [
  { combo: 58, label: "第7层", ml: 8 }, { combo: 70, label: "自定义", ml: 2 }, { combo: 70, label: "自定义线", ml: 2 },
  { combo: 70, label: "ZDYX-21", ml: 2 }, { sep: 9 }, { icon: "attr", label: "属性", w: 50 }, { icon: "rebar", label: "编辑钢筋", w: 75 },
  { icon: "list", label: "构件列表", w: 75 }, { icon: "pick", label: "拾取构件", w: 75 },
];
const row3b = [
  { handle: 8 }, { icon: "twopt", label: "两点", w: 51 }, { icon: "para", label: "平行", w: 51 },
  { icon: "angle", label: "点角", w: 63, caret: true, cml: 6 }, { icon: "arc3", label: "三点辅轴", w: 87, caret: true, cml: 6 },
  { icon: "delaxis", label: "删除辅轴", w: 75 }, { icon: "dim", label: "尺寸标注", w: 87, caret: true, cml: 6 },
];
const row4 = [
  { handle: 7 }, { icon: "cursor", label: "选择", w: 51, active: true }, { icon: null, w: 12, caret: true, cml: 1 }, { sep: 7 },
  { icon: "line", label: "直线", w: 51 }, { icon: "addlen", label: "点加长度", w: 75 }, { icon: "arc", label: "三点画弧", w: 87, caret: true, cml: 6 },
  { combo: 56, label: "" }, { icon: "rect", label: "矩形", w: 52 }, { sep: 5 }, { icon: "smart", label: "智能布置", w: 83, caret: true, cml: 3 },
];
const bottomA = [
  { handle: 8 }, { icon: "ortho", label: "正交", w: 50 }, { icon: "snap", label: "对象捕捉", w: 75, active: true }, { icon: "dyn", label: "动态输入", w: 75 },
];
const bottomB = [
  { icon: "cross", label: "交点", w: 50 }, { icon: "perp", label: "垂点", w: 51, active: true }, { icon: "mid", label: "中点", w: 51, active: true },
  { icon: "vertex", label: "顶点", w: 52 }, { icon: "coord", label: "坐标", w: 50 },
];

const tree = [
  { c: 1, i: "raft", t: "筏板基础", k: "(M)" }, { c: 1, i: "column", t: "框柱", k: "(Z)" }, { c: 1, i: "wall", t: "剪力墙", k: "(Q)" },
  { c: 1, i: "beam", t: "梁", k: "(L)" }, { c: 1, i: "slab", t: "现浇板", k: "(B)", last: 1 },
  { t: "轴线" }, { t: "柱" }, { t: "墙" }, { t: "门窗洞" }, { t: "梁", open: 1 },
  { c: 1, i: "beam", t: "梁", k: "(L)" }, { c: 1, i: "ring", t: "圈梁", k: "(E)", last: 1 },
  { t: "板" }, { t: "基础", open: 1 },
  { c: 1, i: "fbeam", t: "基础梁", k: "(F)" }, { c: 1, i: "raft", t: "筏板基础", k: "(M)" }, { c: 1, i: "pit", t: "集水坑", k: "(K)" },
  { c: 1, i: "ped", t: "柱墩", k: "(Y)" }, { c: 1, i: "rmain", t: "筏板主筋", k: "(R)" }, { c: 1, i: "rneg", t: "筏板负筋", k: "(X)" },
  { c: 1, i: "iso", t: "独立基础", k: "(P)" }, { c: 1, i: "strip", t: "条形基础", k: "(T)" }, { c: 1, i: "cap", t: "桩承台", k: "(V)" },
  { c: 1, i: "fbeam", t: "承台梁", k: "(F)" }, { c: 1, i: "pile", t: "桩", k: "(U)" }, { c: 1, i: "band", t: "基础板带", k: "(W)", last: 1 },
  { t: "其它" }, { t: "自定义", open: 1 },
  { c: 1, i: "cpoint", t: "自定义点" }, { c: 1, i: "cline", t: "自定义线", k: "(X)", sel: 1 }, { c: 1, i: "cface", t: "自定义面" },
];

const thin = [
  [239, 280, 648, 675], [217, 328, 576, 675], [415, 168, 939, 675], [441, 168, 958, 675],
  [446, 168, 964, 675], [778, 168, 1303, 675], [924, 168, 1366, 595],
];
const thick = [
  [217, 388, 1086, 168], [359, 518, 1366, 265], [950, 676, 1366, 573], [1235, 675, 1366, 642],
];
const faces = [
  ["#e6e600", "217,494 309,472 336,498 217,527"],
  ["#e4e4e4", "217,527 336,498 411,570 217,618"],
  ["#b3b3b3", "217,618 411,570 410,588 217,637"],
  ["#b8b800", "217,637 326,609 320,675 217,675"],
  ["#e4e4e4", "1070,200 1117,188 1208,276 1160,288"],
  ["#b3b3b3", "1160,288 1208,276 1207,305 1185,310"],
  ["#009c00", "972,168 966,229 1031,291 1100,276 990,168"],
  ["#00e600", "990,168 1038,168 1159,288 565,437 542,416 1031,291 1100,276"],
  ["#00a000", "542,416 535,489 559,513 565,437"],
  ["#00e600", "558,513 562,482 578,497 605,491 614,501"],
  ["#0058b0", "632,484 1229,339 1229,350 1227,366 630,514"],
  ["#0072e3", "565,437 1159,288 1195,321 1207,317 1224,333 1229,342 634,488 632,486 612,467 611,481"],
  ["#006ad6", "634,487 1229,341 1229,347 634,493"],
  ["#0072e3", "630,498 1227,352 1227,360 630,506"],
  ["#0068d0", "630,506 1227,360 1227,364 630,510"],
  ["#0058ab", "565,437 562,480 578,497 580,468 614,501 630,514 629,499 633,495 632,486 612,467 611,481"],
  ["#0064c8", "580,468 578,497 603,491"],
];
const axes = [[230, 269, "3"], [230, 383, "B"], [936, 181, "4"]];

const Scene = () => (
  <svg width="1149" height="507" viewBox="217 168 1149 507" shapeRendering="crispEdges" aria-hidden="true">
    {thin.map((l, i) => <line key={i} x1={l[0]} y1={l[1]} x2={l[2]} y2={l[3]} stroke="#f00" strokeWidth="1" />)}
    {thick.map((l, i) => <line key={i} x1={l[0]} y1={l[1]} x2={l[2]} y2={l[3]} stroke="#f00" strokeWidth="1" />)}
    {faces.map((f, i) => <polygon key={i} points={f[1]} fill={f[0]} />)}
    {axes.map((a) => (
      <g key={a[2]}>
        <circle cx={a[0]} cy={a[1]} r="12.5" fill="none" stroke="#0a6a18" />
        <text x={a[0]} y={a[1] + 5} textAnchor="middle" fontSize="14" fontFamily="Liberation Sans" fill="#c8c8c8">{a[2]}</text>
      </g>
    ))}
    <g shapeRendering="auto">
      <path d="M272 625L296 619" stroke="#f00" strokeWidth="4" />
      <path d="M314 614L303 622 298 613z" fill="#f00" />
      <path d="M272 625L255 606" stroke="#00e600" strokeWidth="4" />
      <path d="M247 601L258 603 250 611z" fill="#00e600" />
      <path d="M272 625L274 596" stroke="#0a78e6" strokeWidth="4" />
      <path d="M276 582L280 596 270 596z" fill="#0a78e6" />
      <text x="268" y="591" fontSize="14" fontFamily="Liberation Sans" fill="#0a78e6" textAnchor="middle">Z</text>
      <text x="263" y="606" fontSize="12" fontFamily="Liberation Sans" fill="#00e600" textAnchor="middle">Y</text>
      <text x="299" y="613" fontSize="13" fontFamily="Liberation Sans" fill="#f00" textAnchor="middle">X</text>
    </g>
  </svg>
);

export default function App() {
  return (
    <Page>
      <GlobalStyle />
      <TitleBar>
        <Ic n="app" />
        <TitleText>广联达BIM钢筋算量软件 GGJ2013 - [C:\Users\Administrator.PC-20141127NRHM\Desktop\白龙村-2018-02-02-19-24-35(2666版).GGJ12]</TitleText>
        <WinBtn><Minus size={15} strokeWidth={1} /></WinBtn>
        <WinBtn><Copy size={12} strokeWidth={1} /></WinBtn>
        <WinBtn><X size={17} strokeWidth={1} /></WinBtn>
      </TitleBar>
      <ImeGreen />
      <ImeBar>
        <ImeLetter>A</ImeLetter>
        <ImeLetter>•,</ImeLetter>
        <Smile size={16} />
        <Mic size={16} />
        <Keyboard size={16} />
        <UserRound size={16} color="#b5bfc8" />
        <Shirt size={16} fill="#1f78c8" />
        <Wrench size={16} fill="#1f78c8" />
      </ImeBar>
      <ImeLogo>S</ImeLogo>

      <MenuBar>
        {menus.map((m) => <MenuItem key={m[0]} $w={m[1]}>{m[0]}</MenuItem>)}
        <Tool icon="change" label="新建变更" w={86} caret cml={5} />
        <Tool icon="robot" label="广小二" w={66} />
        <AlertTab>属性错误</AlertTab>
        <Tool icon="user" label="13907298339" w={117} caret cml={5} />
        <Beans>造价豆:0</Beans>
        <Ic n="bellblue" />
        <More>»</More>
      </MenuBar>

      <ToolRow $h={28} $mt={1}>
        <ToolGroup $w={149} $pl={5}>{items(row1a)}<More>»</More></ToolGroup>
        <ToolGroup $w={545} $ml={4} $pl={2}>{items(row1b)}<More>»</More></ToolGroup>
        <ToolGroup $ml={6} $pl={1}>{items(row1c)}<More>»</More></ToolGroup>
      </ToolRow>

      <Main>
        <Side>
          <SideHead>
            <SideTitle>模块导航栏</SideTitle>
            <span>⊥</span>
            <X size={11} />
          </SideHead>
          <SideTab>工程设置</SideTab>
          <SideTab>绘图输入</SideTab>
          <TreeTools><Ic n="plus" /><Ic n="minus" /></TreeTools>
          <TreeBox>
            <TreeList>
              {tree.map((r, i) =>
                r.c ? (
                  <TreeRow key={i} $child $last={r.last}>
                    <RowLabel $sel={r.sel}>
                      <Ic n={r.i} />
                      <span>{r.t}{r.k && <Hot>{r.k}</Hot>}</span>
                    </RowLabel>
                    {r.sel && <><Ic n="newpanel" /><NewBadge>NEW</NewBadge></>}
                  </TreeRow>
                ) : (
                  <TreeRow key={i}>
                    <FolderArrow $open={r.open}>
                      {r.open ? <ChevronDown size={15} strokeWidth={2.6} /> : <ChevronRight size={15} strokeWidth={2.6} />}
                    </FolderArrow>
                    <Ic n={r.open ? "folderopen" : "folder"} />
                    <FolderName>{r.t}</FolderName>
                  </TreeRow>
                )
              )}
            </TreeList>
            <ScrollBar>
              <ScrollEnd><ChevronUp size={13} strokeWidth={2.5} /></ScrollEnd>
              <ScrollThumb />
              <ScrollRest><ChevronDown size={13} strokeWidth={2.5} /></ScrollRest>
            </ScrollBar>
          </TreeBox>
          <SideTab>单构件输入</SideTab>
          <SideTab>报表预览</SideTab>
        </Side>

        <Work>
          <ToolRow>
            <ToolGroup $w={790}>{items(row2)}</ToolGroup>
          </ToolRow>
          <ToolRow>
            <ToolGroup $w={566}>{items(row3a)}</ToolGroup>
            <ToolGroup $w={422} $ml={74}>{items(row3b)}</ToolGroup>
          </ToolRow>
          <ToolRow $h={27} $mb={1}>
            <ToolGroup $w={488}>{items(row4)}</ToolGroup>
            <ToolGroup $w={33} $ml={5}><Handle $w={7} /><FakeBox /></ToolGroup>
          </ToolRow>
          <Canvas><Scene /></Canvas>
          <ToolRow $h={28} $mt={1} $mb={0}>
            <ToolGroup $w={208}>{items(bottomA)}</ToolGroup>
            <ToolGroup $w={263} $ml={2} $pl={9}>{items(bottomB)}</ToolGroup>
            <ToolGroup $ml={2}>
              <Handle $w={9} />
              <Combo $w={58}><ComboText>不偏移</ComboText><ComboArrow><Tri $ml={0} /></ComboArrow></Combo>
              <Sep $w={7} />
              <FormLabel $dim $w={19}>X=</FormLabel>
              <SpinBox>0<SpinArrows><SpinTri $up /><SpinTri /></SpinArrows></SpinBox>
              <FormLabel $ml={3} $w={26}>mm</FormLabel>
              <FormLabel $dim $w={18}>Y=</FormLabel>
              <SpinBox>0<SpinArrows><SpinTri $up /><SpinTri /></SpinArrows></SpinBox>
              <FormLabel $ml={3} $w={24}>mm</FormLabel>
              <CheckBox />
              <FormLabel $ml={10} $w={32}>旋转</FormLabel>
              <SpinBox>0.000<SpinArrows><SpinTri $up /><SpinTri /></SpinArrows></SpinBox>
              <FormLabel $ml={5}>°</FormLabel>
            </ToolGroup>
          </ToolRow>
        </Work>
      </Main>

      <StatusBar>
        <StatusCell $w={148} $fs={10}>X=71852 Y=-9059</StatusCell>
        <StatusCell $w={78}>层高<Hot>:2.8m</Hot></StatusCell>
        <StatusCell $w={98}>底标高<Hot>:20.35m</Hot></StatusCell>
        <StatusCell $w={48} $fs={10}>1(1)</StatusCell>
        <StatusCell>按鼠标左键指定第一个角点，或拾取构件图元</StatusCell>
        <StatusCell $w={70} $fs={10}>506.6 FPS</StatusCell>
      </StatusBar>

      <Taskbar>
        <StartBtn><Ic n="windows" /></StartBtn>
        <SearchBox>
          <SearchRing />
          <SearchHint>在这里输入你要搜索的内容</SearchHint>
          <Mic size={18} strokeWidth={1.3} />
        </SearchBox>
        <TaskSlot $w={49}><Ic n="taskview" s={20} /></TaskSlot>
        <TaskSlot $w={50}><Ic n="pinwheel" s={24} /></TaskSlot>
        <TaskSlot $w={50}><Ic n="iewhite" s={26} /></TaskSlot>
        <TaskSlot $w={49}><Ic n="swirl" s={24} /></TaskSlot>
        <TaskSlot $w={60}><Ic n="edge" s={26} /></TaskSlot>
        <TaskSlot $w={40}><Ic n="ie" s={26} /></TaskSlot>
        <TaskSlot $w={54}><Ic n="files" s={22} /></TaskSlot>
        <TaskSlot $w={48} $run><Ic n="greene" s={26} /></TaskSlot>
        <TaskSlot $w={50} $run><Ic n="notes" s={24} /></TaskSlot>
        <TaskSlot $w={48} $run $active><Ic n="app" s={24} /></TaskSlot>
        <TrayText $w={78} $pl={12}>链接</TrayText>
        <TrayText $w={48}><span>31%</span><span>CPU使用</span></TrayText>
        <TrayIcon $w={24} $ml={14}><ChevronUp size={15} /></TrayIcon>
        <TrayIcon $w={24}><Bell size={15} fill="#e8e8e8" /></TrayIcon>
        <TrayIcon $w={25}><BatteryCharging size={16} /></TrayIcon>
        <TrayIcon $w={24}><Wifi size={15} /></TrayIcon>
        <TrayIcon $w={22}><Volume1 size={16} /></TrayIcon>
        <TrayIcon $w={32}><Keyboard size={20} strokeWidth={1} /></TrayIcon>
        <TrayIcon $w={24}><TrayLetter>A</TrayLetter></TrayIcon>
        <TrayIcon $w={32}><ImeSmall>S</ImeSmall></TrayIcon>
        <TrayText $w={78}><span>9:21</span><span>2018/7/19</span></TrayText>
        <TrayIcon $w={36}><MessageSquare size={18} strokeWidth={1.3} /></TrayIcon>
      </Taskbar>
    </Page>
  );
}
